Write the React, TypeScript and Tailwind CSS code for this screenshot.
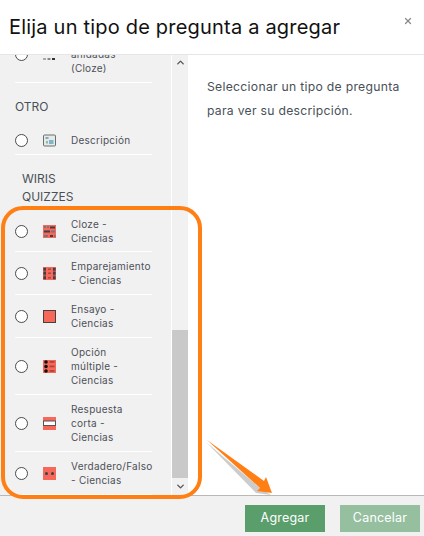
import { ChevronUp, ChevronDown, X } from "lucide-react";
import type { ReactNode } from "react";

const C = "#f6685a";
const D = "#3f3f46";

function Base({ children }: { children: ReactNode }) {
  return (
    <svg width="13" height="13" viewBox="0 0 13 13" className="shrink-0 block">
      {children}
    </svg>
  );
}

const IconCloze = () => (
  <Base>
    <rect width="13" height="13" fill={C} />
    <rect x="1" y="1" width="2" height="2" fill="#777" />
    <rect x="4" y="1" width="2" height="2" fill="#777" />
    <rect x="7" y="1.5" width="5" height="2" fill={D} />
    <rect x="1" y="5.5" width="6" height="2" fill={D} />
    <rect x="8" y="5.5" width="4" height="2" fill="#777" />
    <rect x="1" y="10" width="4" height="2" fill="#777" />
    <rect x="7" y="10" width="3" height="2" fill={D} />
    <rect x="11" y="10" width="1.5" height="2" fill="#777" />
  </Base>
);
const IconMatch = () => (
  <Base>
    <rect width="13" height="13" fill={C} />
    <rect x="0.5" y="0.5" width="2.5" height="12" fill={D} opacity="0.45" />
    <rect x="10" y="0.5" width="2.5" height="12" fill={D} opacity="0.45" />
    {[1, 5, 9.5].map((y) => (
      <g key={y}>
        <rect x="0.5" y={y} width="2.5" height="2.5" fill={D} />
        <rect x="10" y={y} width="2.5" height="2.5" fill={D} />
        <rect x="5" y={y + 0.5} width="3" height="1.5" fill="#a8483e" />
      </g>
    ))}
  </Base>
);
const IconEssay = () => (
  <Base>
    <rect x="0.5" y="0.5" width="12" height="12" fill={C} stroke="#4b4040" strokeWidth="1" />
  </Base>
);
const IconMulti = () => (
  <Base>
    <rect width="13" height="13" fill={C} />
    {[2, 6.5, 11].map((y) => (
      <g key={y}>
        <circle cx="3" cy={y} r="1.8" fill="#111" />
        <rect x="6.5" y={y - 1} width="5" height="1.8" fill="#a8483e" />
      </g>
    ))}
  </Base>
);
const IconShort = () => (
  <Base>
    <rect width="13" height="13" fill={C} />
    <rect x="0.5" y="4" width="12" height="4.5" fill="#fff" stroke="#555" strokeWidth="1" />
  </Base>
);
const IconTF = () => (
  <Base>
    <rect width="13" height="13" fill={C} />
    <circle cx="3.5" cy="6.5" r="1.5" fill={D} />
    <circle cx="9.5" cy="6.5" r="1.5" fill={D} />
  </Base>
);
const IconDesc = () => (
  <Base>
    <rect x="0.5" y="1" width="12" height="11" rx="1" fill="#e4e9ea" stroke="#6b6f72" strokeWidth="1" />
    <rect x="2.5" y="3" width="3" height="2" fill="#93a5ad" />
    <rect x="6" y="6" width="4.5" height="4" fill="#7fb5c6" />
    <rect x="3" y="7" width="2" height="2.5" fill="#8fbf9a" />
  </Base>
);
const IconCut = () => (
  <Base>
    <rect x="0" y="10" width="3" height="2" fill="#aaa" />
    <rect x="4.5" y="10" width="3" height="2" fill="#888" />
    <rect x="9" y="10" width="3" height="2" fill="#333" />
  </Base>
);

function Row({ icon, lines, last, tight }: { icon: ReactNode; lines: string[]; last?: boolean; tight?: boolean }) {
  return (
    <div className={`flex items-center ${tight ? "pt-[7px] pb-[6px]" : "py-[7px]"} ${last ? "" : "border-b border-white"}`}>
      <span className="w-[13px] h-[13px] shrink-0 rounded-full bg-white border-[1.3px] border-[#4a4a4a]" />
      <span className="ml-[15px] mr-[15px]">{icon}</span>
      <div className="text-[10px] leading-[14px] text-[#4d5058] whitespace-nowrap tracking-[0.25px]">
        {lines.map((l, i) => (
          <div key={i}>{l}</div>
        ))}
      </div>
    </div>
  );
}

export default function App() {
  return (
    <div
      className="relative w-[424px] h-[536px] overflow-hidden bg-white flex flex-col"
      style={{ fontFamily: "Inter, 'Open Sans', sans-serif" }}
    >
      <header className="relative z-10 h-[55px] shrink-0 bg-white border-b border-[#e6e6e6] flex items-start justify-between pl-[9px] pr-[11px]">
        <h1 className="mt-[13px] text-[20px] leading-[28px] text-[#111] whitespace-nowrap tracking-[0.2px]">
          Elija un tipo de pregunta a agregar
        </h1>
        <X size={10} strokeWidth={3} className="mt-[16px] text-[#8a8a8a]" />
      </header>

      <div className="flex-1 min-h-0 flex">
        <div className="w-[188px] shrink-0 flex bg-[#f1f1f1]">
          <div className="w-[172px] shrink-0 pl-[15px] pr-[19px] overflow-hidden border-r border-white">
            <div className="-mt-[29px]">
              <Row icon={<IconCut />} lines={["\u00a0", "anidadas", "(Cloze)"]} />
              <div className="pt-[15px] pb-[10px] text-[12px] leading-[18px] text-[#495057]">OTRO</div>
              <Row icon={<IconDesc />} lines={["Descripción"]} />
              <div className="pl-[7px] pt-[15px] pb-[4px] text-[12px] leading-[18px] text-[#495057]">
                <div>WIRIS</div>
                <div>QUIZZES</div>
              </div>
              <Row tight icon={<IconCloze />} lines={["Cloze -", "Ciencias"]} />
              <Row icon={<IconMatch />} lines={["Emparejamiento", "- Ciencias"]} />
              <Row icon={<IconEssay />} lines={["Ensayo -", "Ciencias"]} />
              <Row icon={<IconMulti />} lines={["Opción", "múltiple -", "Ciencias"]} />
              <Row icon={<IconShort />} lines={["Respuesta", "corta -", "Ciencias"]} />
              <Row icon={<IconTF />} lines={["Verdadero/Falso", "- Ciencias"]} />
            </div>
          </div>
          <div className="flex-1 flex flex-col items-stretch">
            <div className="h-[13px] flex items-end justify-center">
              <ChevronUp size={11} strokeWidth={3} className="text-[#555]" />
            </div>
            <div className="flex-1" />
            <div className="h-[148px] bg-[#c9c9c9]" />
            <div className="h-[17px] flex items-center justify-center">
              <ChevronDown size={11} strokeWidth={3} className="text-[#555]" />
            </div>
          </div>
        </div>
        <div className="flex-1 pl-[19px] pr-[16px] pt-[20px] text-[12.2px] leading-[24px] text-[#495057] whitespace-nowrap tracking-[0.28px]">
          <div>Seleccionar un tipo de pregunta</div>
          <div>para ver su descripción.</div>
        </div>
      </div>

      <footer className="h-[41px] shrink-0 border-t border-[#b9b9b9] bg-[#f1f1f1] flex justify-end gap-[15px] pt-[9px] pr-[4px]">
        <button className="w-[80px] h-[27px] bg-[#5a9e6b] text-white text-[12.5px] tracking-[0.2px]">Agregar</button>
        <button className="w-[80px] h-[27px] bg-[#96bf9f] text-white text-[12.5px] tracking-[0.2px]">Cancelar</button>
      </footer>

      <div className="absolute left-[1px] top-[206px] w-[201px] h-[293px] rounded-[22px] border-[4px] border-[#ff7f14]" />
      <svg className="absolute left-0 top-0 pointer-events-none" width="424" height="536" viewBox="0 0 424 536">
        <polygon points="206,442 256,493 271,495 260,488" fill="#000" opacity="0.2" />
        <polygon points="207,440 264,481 266,477 272,493 257,491 260,488" fill="#ff7f14" />
      </svg>
    </div>
  );
}
